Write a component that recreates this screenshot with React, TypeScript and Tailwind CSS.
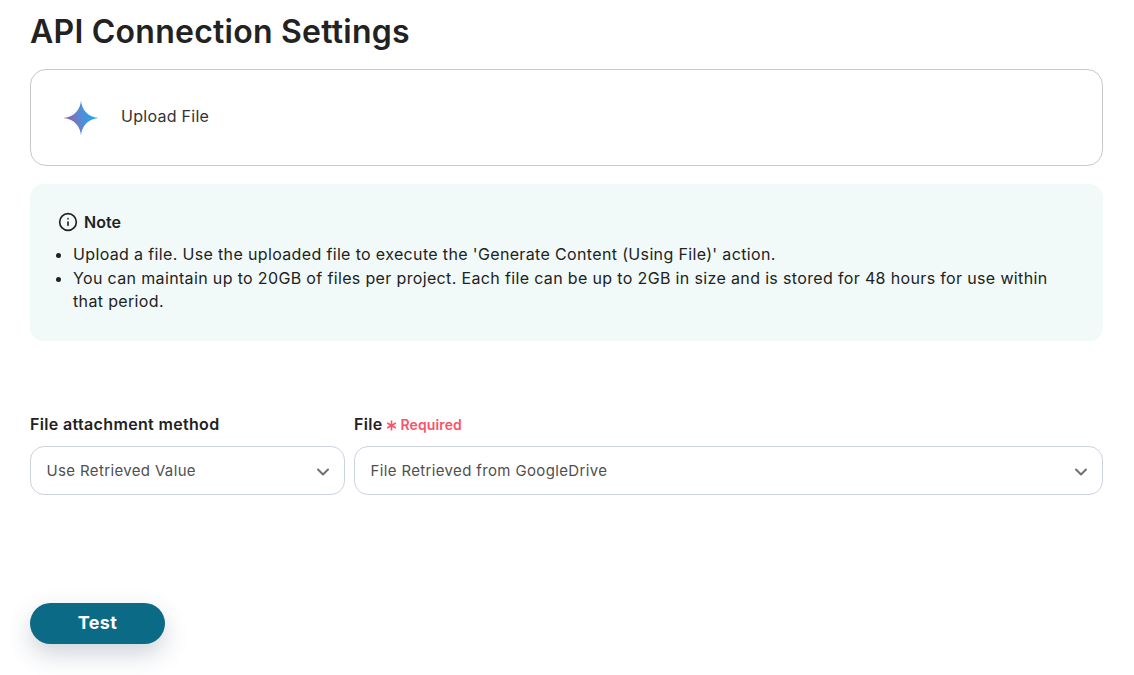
import { ChevronDown, Info } from "lucide-react";

function Sparkle() {
  return (
    <svg width="36" height="36" viewBox="0 0 36 36" className="shrink-0">
      <defs>
        <linearGradient id="sparkleFill" x1="0" y1="0.6" x2="1" y2="0.4">
          <stop offset="0.1" stopColor="#9064b0" />
          <stop offset="0.45" stopColor="#5f86d0" />
          <stop offset="0.85" stopColor="#1fa8ee" />
        </linearGradient>
      </defs>
      <path
        d="M18 0.5C18.8 9.5 24 16.6 35.5 18C24 19.4 18.8 26.5 18 35.5C17.2 26.5 12 19.4 0.5 18C12 16.6 17.2 9.5 18 0.5Z"
        fill="url(#sparkleFill)"
      />
    </svg>
  );
}

function RequiredMark() {
  return (
    <svg width="11" height="11" viewBox="0 0 11 11" className="mt-[3px] shrink-0" stroke="#f8536a" strokeWidth="1.6">
      <path d="M5.5 0.5V10.5M1.2 3L9.8 8M9.8 3L1.2 8" />
    </svg>
  );
}

function SelectBox({ value, className }: { value: string; className: string }) {
  return (
    <div
      className={`h-[49px] flex items-center justify-between pl-[15.5px] pr-[11px] rounded-[14px] border border-[#ccd3dc] bg-white text-[15px] text-[#505050] tracking-[0.36px] ${className}`}
    >
      <span className="mt-[1px]">{value}</span>
      <ChevronDown className="w-[20px] h-[20px] mt-[3px] text-[#707070]" strokeWidth={2.4} />
    </div>
  );
}

export default function App() {
  return (
    <div className="min-h-[675px] w-[1134px] bg-white pl-[30px] pr-[31px] font-['Inter',sans-serif] text-[#222] overflow-hidden">
      <h1 className="pt-[12px] text-[32px] leading-[40px] font-semibold tracking-[0.24px] text-[#222]">API Connection Settings</h1>

      <div className="mt-[17px] h-[97px] flex items-center gap-[22px] pl-[32px] border border-[#c9c9c9] rounded-[16px]">
        <Sparkle />
        <span className="-mt-[3px] text-[16px] tracking-[0.28px] text-[#333]">Upload File</span>
      </div>

      <div className="mt-[18px] h-[157px] rounded-[14px] bg-[#f1faf9] pl-[29px] pr-[40px] pt-[27px]">
        <div className="flex items-center gap-[6px] h-[22px]">
          <Info className="w-[20px] h-[20px] text-[#222] -ml-[1px]" strokeWidth={2} />
          <span className="text-[16px] font-semibold">Note</span>
        </div>
        <ul className="mt-[10px] list-disc pl-[14px] text-[16px] leading-[23px] tracking-[0.35px] text-[#222]">
          <li className="mb-px">Upload a file. Use the uploaded file to execute the 'Generate Content (Using File)' action.</li>
          <li>You can maintain up to 20GB of files per project. Each file can be up to 2GB in size and is stored for 48 hours for use within that period.</li>
        </ul>
      </div>

      <div className="mt-[72px] flex gap-[9px]">
        <div className="w-[315px] shrink-0">
          <div className="h-[22px] flex items-center text-[16px] font-semibold tracking-[0.34px]">File attachment method</div>
          <SelectBox value="Use Retrieved Value" className="mt-[11px]" />
        </div>
        <div className="flex-1">
          <div className="h-[22px] flex items-center gap-[3px]">
            <span className="text-[16px] font-semibold tracking-[0.32px]">File</span>
            <RequiredMark />
            <span className="ml-[1px] text-[14px] font-semibold tracking-[0.12px] text-[#f8536a]">Required</span>
          </div>
          <SelectBox value="File Retrieved from GoogleDrive" className="mt-[11px]" />
        </div>
      </div>

      <button className="block mt-[108px] w-[135px] h-[41px] pb-[2px] rounded-full bg-[#0b6a85] text-white text-[18px] font-bold tracking-[0.4px] shadow-[0_10px_24px_rgba(30,60,80,0.22)]">
        Test
      </button>
    </div>
  );
}
